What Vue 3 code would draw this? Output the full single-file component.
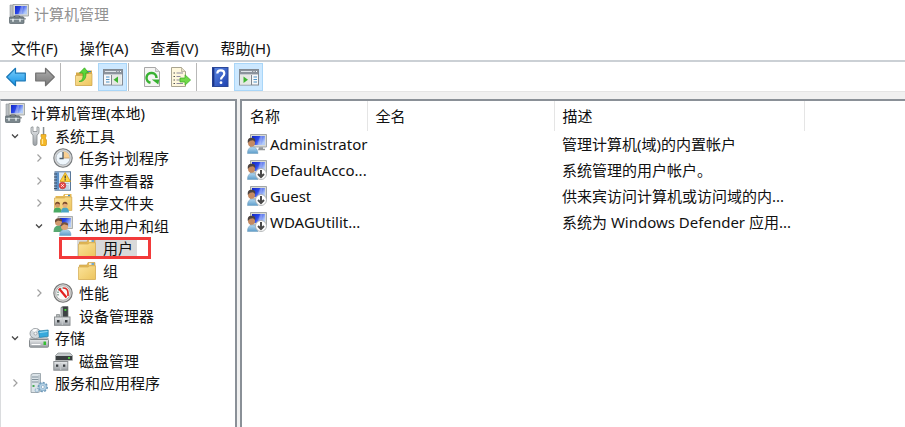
<script setup>
import { ref } from 'vue'

const menus = ['文件(F)', '操作(A)', '查看(V)', '帮助(H)']

const tools = [
  [
    { icon: 'back', label: '后退' },
    { icon: 'forward', label: '前进' }
  ],
  [
    { icon: 'up', label: '上移一级' },
    { icon: 'pane-tree', label: '显示/隐藏控制台树', on: true }
  ],
  [
    { icon: 'refresh', label: '刷新' },
    { icon: 'export', label: '导出列表' }
  ],
  [
    { icon: 'help', label: '帮助' },
    { icon: 'pane-action', label: '显示/隐藏操作窗格', on: true }
  ]
]

const nodes = [
  { level: 0, icon: 'computer', text: '计算机管理(本地)' },
  { level: 1, icon: 'tools', text: '系统工具', state: 'open' },
  { level: 2, icon: 'clock', text: '任务计划程序', state: 'closed' },
  { level: 2, icon: 'events', text: '事件查看器', state: 'closed' },
  { level: 2, icon: 'shared', text: '共享文件夹', state: 'closed' },
  { level: 2, icon: 'users', text: '本地用户和组', state: 'open' },
  { level: 3, icon: 'folder', text: '用户', marked: true },
  { level: 3, icon: 'folder', text: '组' },
  { level: 2, icon: 'gauge', text: '性能', state: 'closed' },
  { level: 2, icon: 'devices', text: '设备管理器' },
  { level: 1, icon: 'storage', text: '存储', state: 'open' },
  { level: 2, icon: 'disk', text: '磁盘管理' },
  { level: 1, icon: 'services', text: '服务和应用程序', state: 'closed' }
]
const selected = ref('用户')

const accounts = [
  { name: 'Administrator', desc: '管理计算机(域)的内置帐户' },
  { name: 'DefaultAcco...', desc: '系统管理的用户帐户。', disabled: true },
  { name: 'Guest', desc: '供来宾访问计算机或访问域的内...', disabled: true },
  { name: 'WDAGUtilit...', desc: '系统为 Windows Defender 应用...', disabled: true }
]
</script>

<template>
  <div class="window">
    <svg class="sprite" width="0" height="0" aria-hidden="true">
      <defs>
        <linearGradient id="g-screen" x1="0" y1="0" x2="1" y2="0.5">
          <stop offset="0" stop-color="#1226c4" /><stop offset="0.5" stop-color="#2a48e8" /><stop offset="1" stop-color="#b4ccf8" />
        </linearGradient>
        <linearGradient id="g-blue" x1="0" y1="0" x2="0" y2="1">
          <stop offset="0" stop-color="#7fd0fb" /><stop offset="1" stop-color="#1292e6" />
        </linearGradient>
        <linearGradient id="g-gray" x1="0" y1="0" x2="0" y2="1">
          <stop offset="0" stop-color="#b0b0b0" /><stop offset="1" stop-color="#787878" />
        </linearGradient>
        <linearGradient id="g-folder" x1="0" y1="0" x2="1" y2="1">
          <stop offset="0" stop-color="#fbe39a" /><stop offset="1" stop-color="#edc55e" />
        </linearGradient>
        <linearGradient id="g-help" x1="0" y1="0" x2="1" y2="1">
          <stop offset="0" stop-color="#5f8be6" /><stop offset="1" stop-color="#1c3fae" />
        </linearGradient>
        <linearGradient id="g-metal" x1="0" y1="0" x2="0" y2="1">
          <stop offset="0" stop-color="#e9ebed" /><stop offset="1" stop-color="#9ba0a5" />
        </linearGradient>
        <linearGradient id="g-shirt" x1="0" y1="0" x2="0" y2="1">
          <stop offset="0" stop-color="#b4d8f0" /><stop offset="1" stop-color="#5d9dca" />
        </linearGradient>
      </defs>

      <symbol id="computer" viewBox="0 0 20 20">
        <path d="M1 1h5v13H1z" fill="#b9bec2" stroke="#8d9498" stroke-width="0.6" />
        <path d="M4 0.5h15.5v11.5H4z" fill="#d9dbd6" stroke="#94999b" stroke-width="0.8" />
        <path d="M6 2h12v8.300H6z" fill="url(#g-screen)" />
        <path d="M12 2h2.500l-2 8.300h-3z" fill="#fff" opacity="0.3" />
        <path d="M10 12h4v2h3v1.500H8z" fill="#a9adae" />
        <path d="M5 13.500q0-1.500 1.500-1.500h3q1.500 0 1.500 1.500" fill="none" stroke="#555b5e" stroke-width="1.200" />
        <rect x="0.500" y="13" width="14.500" height="6.500" rx="0.800" fill="#7b878d" stroke="#566167" stroke-width="0.700" />
        <path d="M1 15.500h13.500" stroke="#b8c2c7" />
        <path d="M4 14.800v3M11 14.800v3" stroke="#e9eff0" stroke-width="1.500" />
      </symbol>

      <symbol id="back" viewBox="0 0 20 20">
        <path d="M0.700 10 9.500 1.300v4.900h9.800v7.600H9.500v4.900z" fill="url(#g-blue)" stroke="#1978b8" stroke-width="1.200" stroke-linejoin="round" />
      </symbol>
      <symbol id="forward" viewBox="0 0 20 20">
        <path d="M19.300 10 10.500 1.300v4.900H0.700v7.600h9.800v4.900z" fill="url(#g-gray)" stroke="#717171" stroke-width="1.200" stroke-linejoin="round" />
      </symbol>
      <symbol id="up" viewBox="0 0 20 20">
        <path d="M2 5.500h7l1.500-2H18V18.500H2z" fill="#d7aa48" />
        <path d="M1.500 8.500H11L12.500 6.500H18V18.500H1.500z" fill="url(#g-folder)" stroke="#cda34a" stroke-width="0.700" />
        <path d="M13 4.500h4" stroke="#3d86bd" />
        <path d="M5 14.500C9 13.500 9.500 10 8.800 6H5.500L10.500 0.800 14.500 6H11.800C12.500 11.500 9.500 15 5 14.500z" fill="#5bd63b" stroke="#2fa61c" stroke-width="0.700" stroke-linejoin="round" />
      </symbol>
      <symbol id="pane-tree" viewBox="0 0 20 20">
        <rect x="0.500" y="2.500" width="19" height="15.500" fill="#f7f8f9" stroke="#838a92" />
        <path d="M1 3h18v4H1z" fill="#8b939c" /><path d="M2 4.500h11" stroke="#dfe5ea" /><path d="M14.500 4.500h1M17 4.500h1" stroke="#fff" />
        <path d="M1 7.500h18" stroke="#c8cdd2" />
        <path d="M8.500 8v10" stroke="#7f868d" />
        <path d="M3 10h3.500M3 12.500h3.500M3 15h3.500" stroke="#4f93c7" stroke-width="1.200" />
        <path d="M9 8h9.500v9.500H9z" fill="#e5e8e4" />
        <path d="M15 9.500v6.500L10.500 12.800z" fill="#3eb532" />
      </symbol>
      <symbol id="pane-action" viewBox="0 0 20 20">
        <rect x="0.500" y="2.500" width="19" height="15.500" fill="#f7f8f9" stroke="#838a92" />
        <path d="M1 3h18v4H1z" fill="#8b939c" /><path d="M2 4.500h11" stroke="#dfe5ea" /><path d="M14.500 4.500h1M17 4.500h1" stroke="#fff" />
        <path d="M1 7.500h18" stroke="#c8cdd2" />
        <path d="M1 8h10.500v9.500H1z" fill="#e5e8e4" />
        <path d="M12.500 8v10" stroke="#7f868d" />
        <path d="M14.500 10h3.500M14.500 12.500h3.500M14.500 15h3.500" stroke="#4f93c7" stroke-width="1.200" />
        <path d="M4.500 9.500v6.500L9 12.800z" fill="#3eb532" />
      </symbol>
      <symbol id="refresh" viewBox="0 0 20 20">
        <path d="M2.500 0.500h11L17.500 4.500V19.500h-15z" fill="#f5f5f3" stroke="#a7a7a7" />
        <path d="M13.500 0.500v4h4" fill="#ddd" stroke="#a7a7a7" stroke-width="0.700" />
        <path d="M8.500 15.800A5 5 0 1 1 14.500 11" fill="none" stroke="#38b131" stroke-width="2.500" />
        <path d="M9.800 12.500h7.500l-1 5z" fill="#38b131" />
      </symbol>
      <symbol id="export" viewBox="0 0 20 20">
        <path d="M0.500 0.500h10L14.500 4.500V19.500H0.500z" fill="#fff8dd" stroke="#aaa590" />
        <path d="M10.500 0.500v4h4" fill="#e5dfc8" stroke="#aaa590" stroke-width="0.700" />
        <path d="M2.500 6h1.500M2.500 9.500h1.500M2.500 13h1.500M2.500 16.500h1.500" stroke="#555" stroke-width="1.200" />
        <path d="M5.500 6h6.500M5.500 9.500h4M5.500 13h4M5.500 16.500h6.500" stroke="#8e8a9e" />
        <path d="M9 11h5V7.800L19.600 13 14 18.200V15H9z" fill="#71d948" stroke="#39aa25" stroke-width="0.700" />
      </symbol>
      <symbol id="help" viewBox="0 0 20 20">
        <rect x="2.500" y="0.500" width="15.500" height="19" fill="url(#g-help)" stroke="#2b4898" />
        <path d="M3.500 1v18" stroke="#1d3689" stroke-width="1.800" />
        <path d="M7.300 6.500c0-4.200 7-4.200 7 0 0 3-3.300 3-3.300 6" fill="none" stroke="#fff" stroke-width="2.200" />
        <circle cx="11" cy="15.700" r="1.400" fill="#fff" />
      </symbol>

      <symbol id="tools" viewBox="0 0 20 20">
        <path d="M2 1.500v4.500q0 2 2 3v8.500q0 2 2 2t2-2V9q2-1 2-3V1.500L8 0.800V5.500H4V0.800z" fill="url(#g-metal)" stroke="#858a8d" stroke-width="0.800" />
        <path d="M13.800 1h1.500v8h-1.500z" fill="#868d91" />
        <path d="M12 8.500h5v2l-0.800 1.500 1.300 2v4.500q0 1.500-3 1.500t-3-1.500V14l1.300-2-0.800-1.500z" fill="#f5b827" stroke="#c68b12" stroke-width="0.600" />
        <path d="M13.500 13v5" stroke="#ffe595" stroke-width="1.200" />
      </symbol>
      <symbol id="clock" viewBox="0 0 20 20">
        <circle cx="10" cy="10" r="9.200" fill="#d8d8d8" stroke="#777b7e" stroke-width="1.100" />
        <circle cx="10" cy="10" r="7" fill="#eef6fc" stroke="#a4adb5" stroke-width="0.800" />
        <path d="M10 10V3.200A6.800 6.800 0 0 1 16.700 10z" fill="#f9cf92" />
        <path d="M10 10h6.500" stroke="#c79d65" stroke-width="0.800" />
        <path d="M10 4v6.500H6.500" fill="none" stroke="#4b5966" stroke-width="1.300" />
      </symbol>
      <symbol id="events" viewBox="0 0 20 20">
        <rect x="2" y="0.800" width="15.500" height="18.400" fill="#dce9f5" stroke="#5a7899" />
        <path d="M2.500 1.300h3.500v17.400H2.500z" fill="#5b8fc5" />
        <path d="M1 3h3M1 6h3M1 9h3M1 12h3M1 15h3M1 17.500h3" stroke="#3b4f66" stroke-width="1.200" />
        <path d="M7 12.500h9M7 15h9M7 17h9" stroke="#94aac2" stroke-width="0.700" />
        <path d="M12.200 1.500 17.500 10.500H7z" fill="#ffd33b" stroke="#d69e16" stroke-width="0.800" stroke-linejoin="round" />
        <path d="M12.200 4.500v3M12.200 8.300v1.200" stroke="#333" stroke-width="1.200" />
        <circle cx="9.500" cy="14.500" r="3.300" fill="#e54848" stroke="#b72d2d" stroke-width="0.600" />
        <path d="m8.300 13.300 2.400 2.400M10.700 13.300l-2.400 2.400" stroke="#fff" />
      </symbol>
      <symbol id="folder" viewBox="0 0 20 20">
        <path d="M2.500 4H10l1-2.500h7V18h-15.500z" fill="#e4b956" stroke="#c59b43" stroke-width="0.600" />
        <path d="M12 3h5" stroke="#fff" stroke-width="1.400" /><path d="M14.500 3H17" stroke="#3e8bc5" stroke-width="1.400" />
        <path d="M1.500 6h9.800L12.500 4.800H18.500V18.500H1.500z" fill="url(#g-folder)" stroke="#d2a94f" stroke-width="0.700" />
      </symbol>
      <symbol id="shared" viewBox="0 0 20 20">
        <path d="M2.500 3H10l1-2h7.500V17h-16z" fill="#e4b956" />
        <path d="M12 2.500h5" stroke="#fff" stroke-width="1.300" /><path d="M15 2.500h2" stroke="#3e8bc5" stroke-width="1.300" />
        <path d="M1.500 5h9.800L12.500 4H18.800V17.500H1.500z" fill="url(#g-folder)" stroke="#d2a94f" stroke-width="0.700" />
        <path d="M0.500 19.500q0-5 4-5t4 5z" fill="#48aa62" />
        <circle cx="4.500" cy="12" r="2.500" fill="#d69967" /><path d="M2 12q0-3.300 2.500-3.300t2.500 2.800l-3-1z" fill="#7a4a2c" />
        <path d="M8 19.500q0-5 4-5t4 5z" fill="#4ca6c2" />
        <circle cx="12" cy="12" r="2.500" fill="#e5ad7a" /><path d="M9.500 12q0-3.300 2.500-3.300t2.500 2.800l-3-1z" fill="#7a4a2c" />
      </symbol>
      <symbol id="users" viewBox="0 0 20 20">
        <path d="M5 0.500h14.500v12H5z" fill="#d9dbd6" stroke="#9a9e9f" stroke-width="0.800" />
        <path d="M6.500 2h11.500v9H6.500z" fill="url(#g-screen)" />
        <path d="M0.500 16q0-6.500 5-6.500t5 6.500z" fill="#58a871" />
        <circle cx="5.500" cy="6.300" r="3.500" fill="#d29a6e" /><path d="M2 6.500Q1.500 2.300 5.500 2.300T9 5.500L5 4.500z" fill="#6b4a36" />
        <path d="M6.500 19.500Q6.500 13.500 12.300 13.500t5.700 6z" fill="url(#g-shirt)" stroke="#6f9dbd" stroke-width="0.500" />
        <circle cx="11.500" cy="10.500" r="3.600" fill="#dfa679" /><path d="M7.900 10.500Q7.500 6.200 11.500 6.200T15.100 9.500L11 8.300z" fill="#7a543b" />
      </symbol>
      <symbol id="gauge" viewBox="0 0 20 20">
        <circle cx="10" cy="10" r="9.200" fill="#d5d6d5" stroke="#777" stroke-width="1.100" />
        <circle cx="10" cy="10" r="7.200" fill="#fafafa" stroke="#999" stroke-width="0.700" />
        <path d="M5 12.500V8.500Q6 5 10 5" fill="none" stroke="#6b8f80" stroke-width="1.300" stroke-dasharray="1.500 1" />
        <path d="M10 5q5 0 5 5v3" fill="none" stroke="#dc2c26" stroke-width="1.700" />
        <path d="M6 5.500 13.500 14.500" stroke="#e31f1f" stroke-width="2.200" />
      </symbol>
      <symbol id="devices" viewBox="0 0 20 20">
        <path d="M8 1.500 10 0.500h5v11H8z" fill="#3e4244" stroke="#696d6f" stroke-width="0.700" /><path d="M8 1.500h2v10H8z" fill="#a0a5a8" />
        <rect x="11.500" y="3" width="1.800" height="1.800" fill="#48e63e" />
        <path d="M3.500 8.500h3V12h-3z" fill="#b7bbbb" stroke="#7f8586" stroke-width="0.700" />
        <rect x="1.500" y="11" width="15.500" height="8.300" fill="url(#g-metal)" stroke="#8b8f92" />
        <rect x="4" y="14" width="2.500" height="2.500" fill="#383d40" /><rect x="12" y="14" width="2.500" height="2.500" fill="#383d40" />
        <path d="M9.300 12v7" stroke="#c8ccce" />
      </symbol>
      <symbol id="storage" viewBox="0 0 20 20">
        <path d="M0.500 11 3 8.500h14l2.500 2.500z" fill="#d1d5d8" stroke="#8d9295" stroke-width="0.600" />
        <ellipse cx="6.500" cy="5.500" rx="5.500" ry="5" fill="#d3d9dd" stroke="#858c90" stroke-width="0.800" />
        <path d="M6.500 5.500 3 1.800 8 0.700z" fill="#fff" /><circle cx="6.500" cy="5.500" r="1.500" fill="#f7f7f7" stroke="#848b90" stroke-width="0.600" />
        <path d="M9.500 3 19.200 2v6.500l-8.700 1z" fill="#36a9dc" stroke="#267ca5" stroke-width="0.700" /><path d="m10.500 4.500 8-1" stroke="#a0dff5" />
        <rect x="0.500" y="11.500" width="19" height="7.700" rx="0.800" fill="url(#g-metal)" stroke="#858a8d" />
        <path d="M2.500 16.500h9" stroke="#fff" /><rect x="14.500" y="13.500" width="2.500" height="3.500" fill="#35bf31" />
      </symbol>
      <symbol id="disk" viewBox="0 0 20 20">
        <path d="M2.500 4.500 5 2h12l2.500 2.500v4.800h-17z" fill="#c5c9cb" stroke="#84898b" stroke-width="0.700" />
        <path d="M3 5h16v4H3z" fill="#3a3e40" /><rect x="15" y="6.200" width="2" height="1.500" fill="#55ef42" />
        <rect x="0.800" y="10.500" width="14" height="8.700" fill="url(#g-metal)" stroke="#8b8f92" />
        <rect x="3" y="13.500" width="2.300" height="2.300" fill="#383d40" /><rect x="10" y="13.500" width="2.300" height="2.300" fill="#383d40" />
        <path d="M7.700 12v7" stroke="#c8ccce" />
      </symbol>
      <symbol id="services" viewBox="0 0 20 20">
        <path d="M2 1.500 4 0.500h7.500V18.500L9 19.500H2z" fill="#dbe3e8" stroke="#8d999f" stroke-width="0.800" />
        <path d="M3 4h6.500M3 6.500h6.500M3 9h6.500" stroke="#82929c" stroke-width="1.200" />
        <path d="M10 2v16" stroke="#acb8bf" /><rect x="3.500" y="12" width="2" height="2" fill="#45a952" />
        <circle cx="13.800" cy="14" r="4.200" fill="#b2cfe4" stroke="#6e99b9" stroke-width="2" stroke-dasharray="1.900 1.300" />
        <circle cx="13.800" cy="14" r="3.700" fill="#b5d2e6" stroke="#7ea7c4" stroke-width="0.700" /><circle cx="13.800" cy="14" r="1.500" fill="#fff" stroke="#769bb7" stroke-width="0.600" />
        <circle cx="8" cy="17.200" r="1.900" fill="#d4e3ed" stroke="#759fbd" stroke-dasharray="1.200 0.800" />
      </symbol>
      <symbol id="account" viewBox="0 0 20 20">
        <path d="M3.500 0.500h16v12.500h-16z" fill="#d9dbd6" stroke="#8f9497" stroke-width="0.800" />
        <path d="M5 2h13v9H5z" fill="url(#g-screen)" />
        <path d="M13 2h2.500l-2 9h-3z" fill="#fff" opacity="0.250" />
        <path d="M12 13.300h4v1.500h2v1.500h-7z" fill="#929799" />
        <path d="M0.500 19.500q0-6.500 5-6.500t5.500 6.500z" fill="url(#g-shirt)" stroke="#6f9dbd" stroke-width="0.500" />
        <ellipse cx="4.500" cy="8.800" rx="3.500" ry="4" fill="#c58a61" />
        <path d="M0.800 9Q0 3.800 4.500 3.800T8.200 8L6 6.300 3 6.800z" fill="#4c4340" />
      </symbol>
      <symbol id="disabled" viewBox="0 0 12 12">
        <circle cx="6" cy="6" r="5.500" fill="#fff" stroke="#a4a8aa" stroke-width="0.800" />
        <path d="M6 2v6.800M3 6l3 3 3-3" fill="none" stroke="#4a4a4a" stroke-width="2" />
      </symbol>
      <symbol id="chev-open" viewBox="0 0 10 10"><path d="m2 3.500 3 3 3-3" fill="none" stroke="#484848" stroke-width="1.300" /></symbol>
      <symbol id="chev-closed" viewBox="0 0 10 10"><path d="m3.500 1.500 3.500 3.500-3.500 3.500" fill="none" stroke="#a0a0a0" stroke-width="1.200" /></symbol>
    </svg>

    <header class="title">
      <svg class="icon"><use href="#computer" /></svg>
      <span>计算机管理</span>
    </header>

    <nav class="menu">
      <button v-for="m in menus" :key="m" type="button">{{ m }}</button>
    </nav>

    <div class="toolbar" role="toolbar">
      <div v-for="(group, i) in tools" :key="i" class="group">
        <button v-for="t in group" :key="t.icon" type="button" :class="{ on: t.on }" :aria-label="t.label">
          <svg class="icon"><use :href="'#' + t.icon" /></svg>
        </button>
      </div>
    </div>

    <main class="panes">
      <ul class="tree" role="tree">
        <li
          v-for="n in nodes"
          :key="n.text"
          role="treeitem"
          :class="'level-' + n.level"
          :aria-selected="selected === n.text"
          @click="selected = n.text"
        >
          <button v-if="n.state" type="button" class="chevron" :aria-label="n.text">
            <svg><use :href="'#chev-' + n.state" /></svg>
          </button>
          <span v-else-if="n.level" class="chevron"></span>
          <span class="node" :class="{ selected: selected === n.text, marked: n.marked }">
            <svg class="icon"><use :href="'#' + n.icon" /></svg>
            <span class="label">{{ n.text }}</span>
          </span>
        </li>
      </ul>

      <section class="list">
        <table>
          <colgroup><col class="c-name" /><col class="c-full" /><col class="c-desc" /><col /></colgroup>
          <thead>
            <tr><th>名称</th><th>全名</th><th>描述</th><td></td></tr>
          </thead>
          <tbody>
            <tr v-for="a in accounts" :key="a.name">
              <td class="name">
                <div class="entry">
                  <span class="picture">
                    <svg class="icon"><use href="#account" /></svg>
                    <svg v-if="a.disabled" class="badge"><use href="#disabled" /></svg>
                  </span>
                  <span>{{ a.name }}</span>
                </div>
              </td>
              <td></td>
              <td>{{ a.desc }}</td>
              <td></td>
            </tr>
          </tbody>
        </table>
      </section>
    </main>
  </div>
</template>

<style>
body {
  margin: 0;
}
</style>

<style scoped>
.window {
  display: flex;
  flex-direction: column;
  min-height: 100vh;
  background: #fff;
  color: #111;
  font: 15px/22px "Noto Sans", "Noto Sans CJK SC", sans-serif;
}
.sprite {
  display: block;
}
button {
  padding: 0;
  border: 0;
  background: none;
  color: inherit;
  font: inherit;
}
.icon {
  display: block;
  flex: none;
  width: 20px;
  height: 20px;
}
.title {
  display: flex;
  align-items: center;
  gap: 5px;
  padding: 3px 9px;
  color: #929292;
}
.menu {
  display: flex;
  gap: 22px;
  padding: 9px 11px 1px;
  border-bottom: 2px solid #cbd0d5;
}
.toolbar {
  display: flex;
  height: 28px;
  padding: 1px 1px 0;
  border-bottom: 1px solid #e5e5e5;
}
.group {
  display: flex;
}
.group + .group {
  margin-left: 1px;
  padding-left: 8px;
  border-left: 1px solid #b8b8b8;
}
.group button {
  display: grid;
  place-items: center;
  box-sizing: border-box;
  width: 29px;
  border: 1px solid transparent;
}
.group .on {
  background: #cce8ff;
  border-color: #a9d6f8;
}
.panes {
  display: flex;
  flex: 1;
  gap: 3px;
  padding-top: 7px;
  background: #f0f0f0;
}
.tree {
  box-sizing: border-box;
  flex: none;
  width: 237px;
  margin: 0;
  padding: 1px 0 0;
  list-style: none;
  background: #fff;
  border: 2px solid #8a9097;
  border-left: 1px solid #dadcde;
  border-bottom: 0;
}
.tree li {
  display: flex;
  align-items: center;
  height: 22px;
  padding-left: 4px;
}
.tree li:nth-child(even) {
  height: 23px;
}
.tree .level-2 {
  padding-left: 28px;
}
.tree .level-3 {
  padding-left: 52px;
}
.chevron {
  display: grid;
  place-items: center;
  flex: none;
  width: 20px;
  margin-right: 4px;
}
.chevron svg {
  width: 10px;
  height: 10px;
}
.node {
  position: relative;
  display: flex;
  gap: 6px;
  padding-right: 4px;
  white-space: nowrap;
}
.node .icon {
  margin-top: 1px;
}
.selected {
  background: #d9d9d9;
}
.marked::after {
  content: "";
  position: absolute;
  inset: 0 -14px 0 -18px;
  border: 3px solid #f23a3a;
}
.list {
  flex: 1;
  min-width: 0;
  background: #fff;
  border-top: 2px solid #8a9097;
  border-left: 2px solid #8a9097;
}
table {
  width: 100%;
  table-layout: fixed;
  border-collapse: collapse;
}
.c-name {
  width: 125px;
}
.c-full {
  width: 187px;
}
.c-desc {
  width: 250px;
}
th {
  height: 30px;
  padding: 0 8px;
  border-right: 1px solid #e5e5e5;
  font-weight: 400;
  text-align: left;
}
tbody td {
  height: 26px;
  padding: 0 0 0 8px;
  white-space: nowrap;
}
tbody .name {
  padding-left: 5px;
}
.entry {
  display: flex;
  align-items: center;
  gap: 3px;
}
.picture {
  position: relative;
}
.badge {
  position: absolute;
  right: 0;
  bottom: 0;
  width: 12px;
  height: 12px;
}
</style>
